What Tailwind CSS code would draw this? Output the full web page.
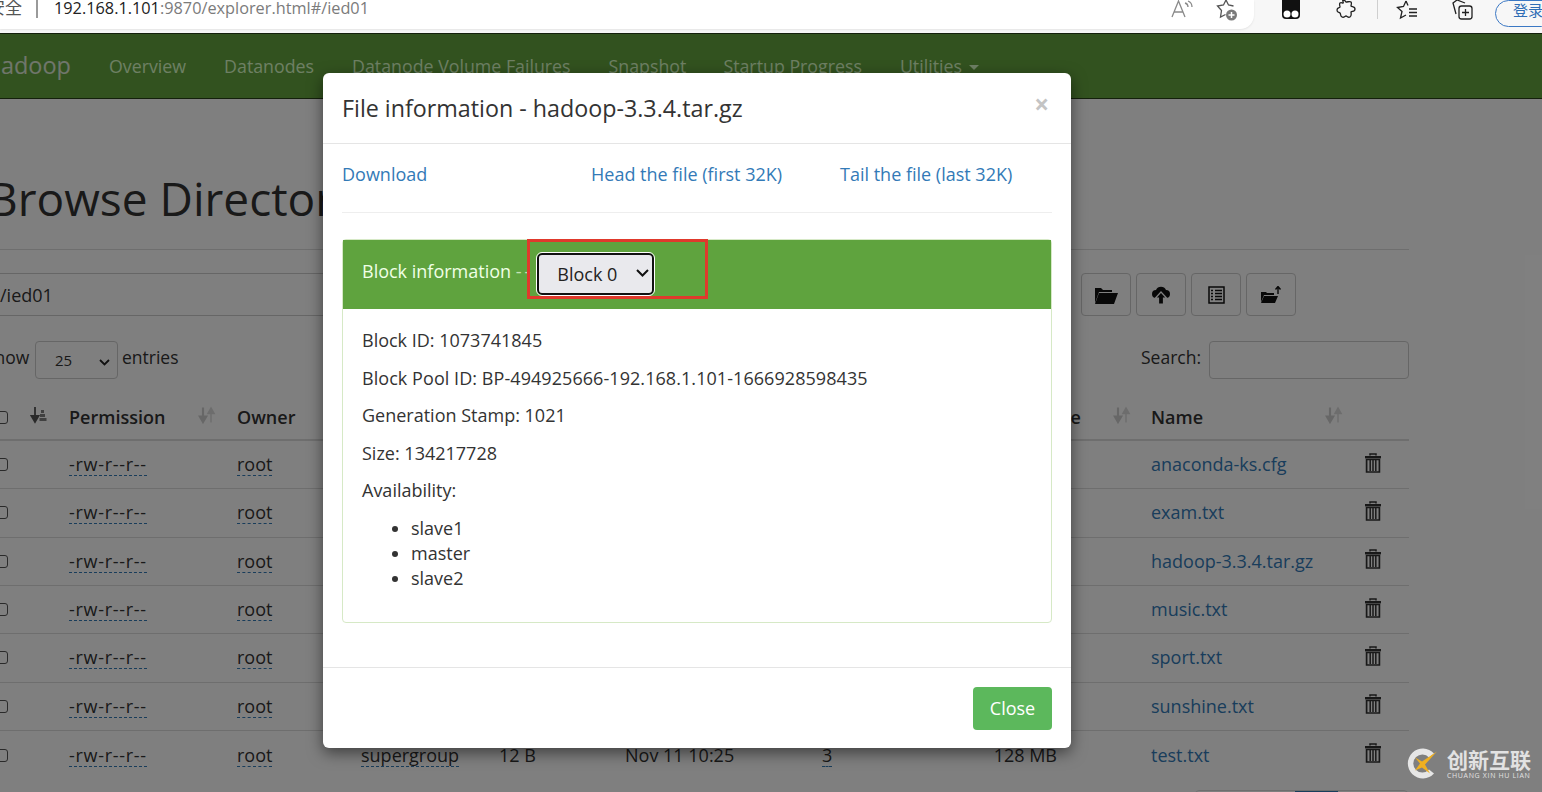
<!doctype html>
<html>
<head>
<meta charset="utf-8">
<script src="https://cdn.jsdelivr.net/npm/@tailwindcss/browser@4"></script>
</head>
<body class="m-0 bg-white font-['Open_Sans','Noto_Sans_CJK_SC',sans-serif] text-[#333]">
<svg class="hidden">
  <symbol id="trash" viewBox="0 0 18 20"><path d="M6 2.600V1h6v1.600" fill="none" stroke="currentColor" stroke-width="1.500"/><path d="M1 3h16v2.400H1z" fill="currentColor"/><path d="M2.600 6.500h12.800V19H2.600z" fill="none" stroke="currentColor" stroke-width="1.700"/><path d="M6.200 7v11M9 7v11M11.800 7v11" stroke="currentColor" stroke-width="1.500"/></symbol>
  <symbol id="sort" viewBox="0 0 18 18"><path d="M5 1.500v12M1.800 10.500 5 16l3.200-5.500z" stroke="currentColor" stroke-width="2.200" fill="currentColor"/><path d="M13 16.500v-12M9.800 7.500 13 2l3.200 5.500z" stroke="currentColor" stroke-width="1.400" fill="currentColor" opacity=".75"/></symbol>
</svg>
<div class="relative h-[792px] w-[1542px] overflow-hidden">
  <!-- browser toolbar -->
  <div class="flex h-[33px] items-start bg-[#f7f7f7]">
    <div class="flex h-[29px] w-[1254px] shrink-0 items-start rounded-br-[14px] bg-white pl-0 shadow-[0_1px_2px_rgba(0,0,0,0.08)]">
      <span class="ml-[-12px] mt-[-4px] w-[34px] shrink-0 overflow-hidden whitespace-nowrap text-[17px] leading-6 text-[#555]">安全</span>
      <span class="ml-[14px] mt-0 h-[18px] w-[2px] bg-[#9a9a9a]"></span>
      <span class="ml-[16px] mt-[-4px] whitespace-nowrap text-[16.300px] leading-6 text-[#7b7b7b]"><span class="text-[#222]">192.168.1.101</span>:9870/explorer.html#/ied01</span>
      <div class="ml-auto flex items-start gap-[19px] pr-[13px] pt-0 text-[#666]">
        <svg class="h-[20px] w-[26px]" viewBox="0 0 26 20" fill="none" stroke="#8a8a8a" stroke-width="1.300"><path d="M2 17 8.500 1l6.500 16M4.500 12h8"/><path d="M15 3c2 .500 3 2 3 4M18 1c2.500 1 4 3 4 6"/></svg>
        <svg class="h-[22px] w-[26px]" viewBox="0 0 26 22" fill="none"><path d="M11 0 8.500 5 2.500 6l4 4.500L5.500 17l5-2.500" stroke="#555" stroke-width="1.300"/><path d="M11 0l2.500 5 5 1" stroke="#555" stroke-width="1.300"/><circle cx="16.500" cy="15" r="5.500" fill="#7a7a7a"/><path d="M16.500 12v6M13.500 15h6" stroke="#fff" stroke-width="1.500"/></svg>
      </div>
    </div>
    <div class="flex shrink-0 items-start pt-0">
      <svg class="ml-[27px] h-[20px] w-[20px]" viewBox="0 0 20 20"><path d="M1 0h18v15a4 4 0 0 1-4 4H5a4 4 0 0 1-4-4z" fill="#111"/><circle cx="6" cy="14" r="3.500" fill="#fff"/><circle cx="14" cy="14" r="3.500" fill="#fff"/></svg>
      <svg class="ml-[35px] h-[20px] w-[20px]" viewBox="0 0 20 20" fill="none" stroke="#222" stroke-width="1.300"><path d="M7 0c3 0 2 2 3 2 2 0 4-1 5 0s0 3 0 4c1 1 4 0 4 3s-3 2-4 3c0 1 1 4-1 5s-3-1-4-1-2 2-4 1-1-3-2-4-3 0-3-3 3-2 3-3-1-3 0-4 2 0 3 0-1-3 0-3z"/></svg>
      <span class="ml-[21px] h-[19px] w-[1px] bg-[#cfcfcf]"></span>
      <svg class="ml-[18px] h-[20px] w-[22px]" viewBox="0 0 22 20" fill="none" stroke="#222" stroke-width="1.300"><path d="M10 1 7.500 6.500 1.500 7.500l4.500 4L4.500 18l5.500-3"/><path d="M10 1l2 4.500M13 9h8M13 12.500h8M13 16h8"/></svg>
      <svg class="ml-[34px] h-[20px] w-[21px]" viewBox="0 0 21 20" fill="none" stroke="#222" stroke-width="1.300"><path d="M5 0 1 3l3 11"/><path d="M5 0l8 3"/><rect x="7" y="6" width="13" height="13" rx="2.500"/><path d="M13.500 9v7M10 12.500h7"/></svg>
      <div class="ml-[22px] flex h-[27px] w-[60px] shrink-0 items-start rounded-b-[14px] rounded-tl-[14px] border border-[#3b78c4] pl-[17px] text-[15px] leading-[18px] text-[#2f6db5]">登录</div>
    </div>
  </div>

  <!-- navbar -->
  <div class="flex h-[66px] items-center border-y border-black/60 bg-[#64a43e] pl-0 text-[17.800px] text-[#dcffc8]">
    <span class="ml-[-17px] w-[88px] text-right text-[23.500px] text-white/80">Hadoop</span>
    <span class="ml-[38px]">Overview</span>
    <span class="ml-[38px]">Datanodes</span>
    <span class="ml-[38px]">Datanode Volume Failures</span>
    <span class="ml-[38px]">Snapshot</span>
    <span class="ml-[37px]">Startup Progress</span>
    <span class="ml-[38px]">Utilities <span class="ml-0.5 inline-block border-x-[5px] border-t-[5px] border-x-transparent border-t-[#dcffc8] align-middle"></span></span>
  </div>

  <!-- page -->
  <div class="ml-[-12px] w-[1421px]">
    <h1 class="mt-[64px] whitespace-nowrap text-[46px] leading-[70px]">Browse Directory</h1>
    <div class="mt-[16px] border-t border-[#ddd]"></div>
    <div class="mt-[23px] flex h-[43px] gap-[5px]">
      <div class="mr-[5px] flex w-[1083px] items-center border-y border-[#ccc] pl-[12px] pt-[2px] text-[18px]">/ied01</div>
      <div class="flex w-[50px] items-center justify-center rounded border border-[#ccc]"><svg class="h-[18px] w-[24px]" viewBox="0 0 24 18"><path d="M1 17V2h6l2 2h9v2H5z M5 7h19l-4 11H1z" fill="#111"/></svg></div>
      <div class="flex w-[50px] items-center justify-center rounded border border-[#ccc]"><svg class="h-[20px] w-[20px]" viewBox="0 0 20 20"><path d="M5 13a4 4 0 0 1 0-8 5.500 5.500 0 0 1 10 0 4 4 0 0 1 0 8z" fill="#111"/><path d="M10 7l5.500 6H12.500v6h-5v-6H4.500z" fill="#111" stroke="#fff" stroke-width="1.200"/></svg></div>
      <div class="flex w-[50px] items-center justify-center rounded border border-[#ccc]"><svg class="h-[18px] w-[17px]" viewBox="0 0 17 18"><rect x="1" y="1" width="15" height="16" fill="none" stroke="#111" stroke-width="1.500"/><path d="M3 4.500h2M7 4.500h7M3 7.500h2M7 7.500h7M3 10.500h2M7 10.500h7M3 13.500h2M7 13.500h7" stroke="#111" stroke-width="1.600"/></svg></div>
      <div class="flex w-[50px] items-center justify-center rounded border border-[#ccc]"><svg class="h-[18px] w-[22px]" viewBox="0 0 22 18"><path d="M1 16V6h5l1 1h7v2H4z M4 10h14l-3 7H1z" fill="#111"/><path d="M18 8V1M15.500 3.500 18 .5l2.500 3" stroke="#111" stroke-width="1.400" fill="none"/></svg></div>
    </div>
    <div class="mt-[25px] flex h-[38px] items-center text-[17.500px]">
      <span class="mb-[6px] ml-[-3px] w-[50px]">Show</span>
      <span class="flex h-[38px] w-[83px] items-center justify-between rounded border border-[#ccc] pl-[19px] pr-[7px] text-[15px]">25 <svg class="mt-1 h-[7px] w-[11px]" viewBox="0 0 11 7" fill="none" stroke="#222" stroke-width="1.800"><path d="m1 1 4.500 4.500L10 1"/></svg></span>
      <span class="mb-[6px] ml-[4px]">entries</span>
      <span class="mb-[6px] ml-auto">Search:</span>
      <span class="ml-[8px] h-[38px] w-[200px] rounded border border-[#ccc]"></span>
    </div>
    <!-- table -->
    <div class="mt-[17px] grid grid-cols-[40px_41px_168px_124px_138px_126px_197px_118px_211px_213px_45px] text-[18px]">
      <div class="flex h-[45px] items-center border-b-2 border-[#ddd] pl-[7px]"><span class="h-[13px] w-[13px] rounded-[3px] border border-[#555] bg-white"></span></div>
      <div class="flex h-[45px] items-center border-b-2 border-[#ddd]"><svg class="mb-[6px] ml-[2px] h-[18px] w-[18px] text-[#555]" viewBox="0 0 18 18"><path d="M5 1v12M1.500 10 5 16l3.500-6z" stroke="currentColor" stroke-width="1.800" fill="currentColor"/><path d="M11 4h3v3h-3zM10 8h5v3h-5zM9.500 12h7v3h-7z" fill="currentColor" opacity=".75"/></svg></div>
      <div class="flex h-[45px] items-center justify-between border-b-2 border-[#ddd] pr-[21px] font-semibold">Permission <svg class="mb-[6px] h-[18px] w-[18px] text-[#cfcfcf]"><use href="#sort"/></svg></div>
      <div class="flex h-[45px] items-center border-b-2 border-[#ddd] font-semibold">Owner</div>
      <div class="h-[45px] border-b-2 border-[#ddd]"></div>
      <div class="h-[45px] border-b-2 border-[#ddd]"></div>
      <div class="h-[45px] border-b-2 border-[#ddd]"></div>
      <div class="h-[45px] border-b-2 border-[#ddd]"></div>
      <div class="flex h-[45px] items-center justify-end border-b-2 border-[#ddd] pr-[20px] font-semibold"><span class="mr-[32px] whitespace-nowrap">Block Size</span><svg class="mb-[6px] h-[18px] w-[18px] text-[#cfcfcf]"><use href="#sort"/></svg></div>
      <div class="flex h-[45px] items-center justify-between border-b-2 border-[#ddd] pr-[21px] font-semibold">Name <svg class="mb-[6px] h-[18px] w-[18px] text-[#cfcfcf]"><use href="#sort"/></svg></div>
      <div class="h-[45px] border-b-2 border-[#ddd]"></div>

      <div class="flex h-[48.330px] items-center border-b border-[#ddd] pl-[7px]"><span class="h-[13px] w-[13px] rounded-[3px] border border-[#555] bg-white"></span></div><div class="border-b border-[#ddd]"></div><div class="flex items-center border-b border-[#ddd]"><span class="border-b border-dashed border-[#337ab7] leading-[22px] tracking-[0.7px]">-rw-r--r--</span></div><div class="flex items-center border-b border-[#ddd]"><span class="border-b border-dashed border-[#337ab7] leading-[22px]">root</span></div><div class="col-span-5 border-b border-[#ddd]"></div><div class="flex items-center border-b border-[#ddd] text-[#337ab7]">anaconda-ks.cfg</div><div class="flex items-center border-b border-[#ddd] pb-[4px]"><svg class="h-[20px] w-[18px]"><use href="#trash"/></svg></div>

      <div class="flex h-[48.330px] items-center border-b border-[#ddd] pl-[7px]"><span class="h-[13px] w-[13px] rounded-[3px] border border-[#555] bg-white"></span></div><div class="border-b border-[#ddd]"></div><div class="flex items-center border-b border-[#ddd]"><span class="border-b border-dashed border-[#337ab7] leading-[22px] tracking-[0.7px]">-rw-r--r--</span></div><div class="flex items-center border-b border-[#ddd]"><span class="border-b border-dashed border-[#337ab7] leading-[22px]">root</span></div><div class="col-span-5 border-b border-[#ddd]"></div><div class="flex items-center border-b border-[#ddd] text-[#337ab7]">exam.txt</div><div class="flex items-center border-b border-[#ddd] pb-[4px]"><svg class="h-[20px] w-[18px]"><use href="#trash"/></svg></div>

      <div class="flex h-[48.330px] items-center border-b border-[#ddd] pl-[7px]"><span class="h-[13px] w-[13px] rounded-[3px] border border-[#555] bg-white"></span></div><div class="border-b border-[#ddd]"></div><div class="flex items-center border-b border-[#ddd]"><span class="border-b border-dashed border-[#337ab7] leading-[22px] tracking-[0.7px]">-rw-r--r--</span></div><div class="flex items-center border-b border-[#ddd]"><span class="border-b border-dashed border-[#337ab7] leading-[22px]">root</span></div><div class="col-span-5 border-b border-[#ddd]"></div><div class="flex items-center border-b border-[#ddd] text-[#337ab7]">hadoop-3.3.4.tar.gz</div><div class="flex items-center border-b border-[#ddd] pb-[4px]"><svg class="h-[20px] w-[18px]"><use href="#trash"/></svg></div>

      <div class="flex h-[48.330px] items-center border-b border-[#ddd] pl-[7px]"><span class="h-[13px] w-[13px] rounded-[3px] border border-[#555] bg-white"></span></div><div class="border-b border-[#ddd]"></div><div class="flex items-center border-b border-[#ddd]"><span class="border-b border-dashed border-[#337ab7] leading-[22px] tracking-[0.7px]">-rw-r--r--</span></div><div class="flex items-center border-b border-[#ddd]"><span class="border-b border-dashed border-[#337ab7] leading-[22px]">root</span></div><div class="col-span-5 border-b border-[#ddd]"></div><div class="flex items-center border-b border-[#ddd] text-[#337ab7]">music.txt</div><div class="flex items-center border-b border-[#ddd] pb-[4px]"><svg class="h-[20px] w-[18px]"><use href="#trash"/></svg></div>

      <div class="flex h-[48.330px] items-center border-b border-[#ddd] pl-[7px]"><span class="h-[13px] w-[13px] rounded-[3px] border border-[#555] bg-white"></span></div><div class="border-b border-[#ddd]"></div><div class="flex items-center border-b border-[#ddd]"><span class="border-b border-dashed border-[#337ab7] leading-[22px] tracking-[0.7px]">-rw-r--r--</span></div><div class="flex items-center border-b border-[#ddd]"><span class="border-b border-dashed border-[#337ab7] leading-[22px]">root</span></div><div class="col-span-5 border-b border-[#ddd]"></div><div class="flex items-center border-b border-[#ddd] text-[#337ab7]">sport.txt</div><div class="flex items-center border-b border-[#ddd] pb-[4px]"><svg class="h-[20px] w-[18px]"><use href="#trash"/></svg></div>

      <div class="flex h-[48.330px] items-center border-b border-[#ddd] pl-[7px]"><span class="h-[13px] w-[13px] rounded-[3px] border border-[#555] bg-white"></span></div><div class="border-b border-[#ddd]"></div><div class="flex items-center border-b border-[#ddd]"><span class="border-b border-dashed border-[#337ab7] leading-[22px] tracking-[0.7px]">-rw-r--r--</span></div><div class="flex items-center border-b border-[#ddd]"><span class="border-b border-dashed border-[#337ab7] leading-[22px]">root</span></div><div class="col-span-5 border-b border-[#ddd]"></div><div class="flex items-center border-b border-[#ddd] text-[#337ab7]">sunshine.txt</div><div class="flex items-center border-b border-[#ddd] pb-[4px]"><svg class="h-[20px] w-[18px]"><use href="#trash"/></svg></div>

      <div class="flex h-[48.330px] items-center pl-[7px]"><span class="h-[13px] w-[13px] rounded-[3px] border border-[#555] bg-white"></span></div><div></div><div class="flex items-center"><span class="border-b border-dashed border-[#337ab7] leading-[22px] tracking-[0.7px]">-rw-r--r--</span></div><div class="flex items-center"><span class="border-b border-dashed border-[#337ab7] leading-[22px]">root</span></div><div class="flex items-center"><span class="border-b border-dashed border-[#337ab7] leading-[22px]">supergroup</span></div><div class="flex items-center">12 B</div><div class="flex items-center">Nov 11 10:25</div><div class="flex items-center"><span class="border-b border-dashed border-[#337ab7] leading-[22px]">3</span></div><div class="flex items-center justify-end pr-[94px]">128 MB</div><div class="flex items-center text-[#337ab7]">test.txt</div><div class="flex items-center pb-[4px]"><svg class="h-[20px] w-[18px]"><use href="#trash"/></svg></div>
    </div>
    <div class="ml-[1207px] mt-[11px] flex h-[20px] w-[213px] rounded-t border border-[#ddd]"><span class="ml-[99px] h-[20px] w-[43px] bg-[#337ab7]"></span></div>
  </div>

  <!-- backdrop -->
  <div class="absolute inset-x-0 bottom-0 top-[33px] bg-black/50"></div>

  <!-- modal -->
  <div class="absolute left-[323px] top-[73px] flex h-[675px] w-[748px] flex-col rounded-[6px] bg-white shadow-[0_5px_15px_rgba(0,0,0,0.5)]">
    <div class="flex h-[71px] items-center justify-between border-b border-[#e5e5e5] pl-[19px] pr-[22px]">
      <span class="mt-[1px] text-[23.270px] leading-none text-[#333]">File information - hadoop-3.3.4.tar.gz</span>
      <span class="mb-[8px] text-[26px] font-bold leading-none text-[#c4c4c4]">×</span>
    </div>
    <div class="flex-1 px-[19px]">
      <div class="flex h-[69px] items-center border-b border-[#eee] pb-[8px] text-[18px] text-[#337ab7]">
        <span class="w-[249px]">Download</span>
        <span class="w-[249px]">Head the file (first 32K)</span>
        <span>Tail the file (last 32K)</span>
      </div>
      <div class="mt-[26px] h-[384px] rounded border border-[#d6e9c6]">
        <div class="flex h-[69px] items-center bg-[#5fa33e] pl-[19px] text-[18px] text-[#f0ffe6]">
          <span class="mb-[6px]">Block information <span class="tracking-[3px] opacity-70">--</span></span>
          <span class="relative mb-[2px] ml-[4px] flex h-[42px] w-[117px] items-center rounded-[5px] border-2 border-[#111] bg-[#e9e9ed] pl-[18px] pt-[1px] text-[18px] text-[#222] outline-[1.500px] outline-white">Block 0
            <svg class="absolute right-[3px] top-[14px] h-[8px] w-[13px]" viewBox="0 0 13 8" fill="none" stroke="#111" stroke-width="2"><path d="m1 1 5.500 5.500L12 1"/></svg>
          </span>
        </div>
        <div class="px-[19px] pt-[19px] text-[18px] leading-[25px] text-[#333]">
          <p class="mb-[12.500px]">Block ID: 1073741845</p>
          <p class="mb-[12.500px] tracking-[0.06px]">Block Pool ID: BP-494925666-192.168.1.101-1666928598435</p>
          <p class="mb-[12.500px]">Generation Stamp: 1021</p>
          <p class="mb-[12.500px]">Size: 134217728</p>
          <p class="mb-[12.500px]">Availability:</p>
          <ul class="list-disc pl-[49px]"><li>slave1</li><li>master</li><li>slave2</li></ul>
        </div>
      </div>
    </div>
    <div class="flex h-[81px] items-start justify-end border-t border-[#e5e5e5] pr-[19px] pt-[19px]">
      <span class="flex h-[43px] w-[79px] items-center justify-center rounded bg-[#5cb85c] text-[18px] text-white">Close</span>
    </div>
  </div>

  <!-- red annotation -->
  <div class="absolute left-[527px] top-[239px] h-[60px] w-[181px] border-[3px] border-[#e0392c]"></div>

  <!-- watermark -->
  <div class="absolute left-[1406px] top-[746px] flex items-center gap-[7px]">
    <svg class="h-[35px] w-[34px]" viewBox="0 0 34 34"><path d="M28 7a15 15 0 1 0 0 20l-5-4a9 9 0 1 1 0-12z" fill="#e6e6e6"/><path d="M9 11l7 4 15-10-12 13 5 9-8-6-7 3 5-7z" fill="#f0b020"/></svg>
    <div class="flex flex-col text-[#e2e2e2]">
      <span class="text-[21px] leading-[24px] font-semibold">创新互联</span>
      <span class="whitespace-nowrap text-[7px] leading-[8px] tracking-[0.65px]">CHUANG XIN HU LIAN</span>
    </div>
  </div>
</div>
</body>
</html>
